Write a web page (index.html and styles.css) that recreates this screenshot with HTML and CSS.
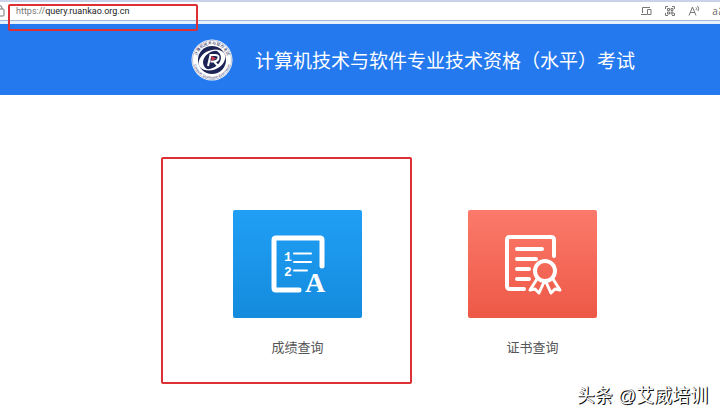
FILE: index.html
```html
<!DOCTYPE html>
<html lang="zh-CN">
<head>
  <meta charset="UTF-8" />
  <meta name="viewport" content="width=device-width, initial-scale=1.0" />
  <title>计算机技术与软件专业技术资格（水平）考试</title>
  <link rel="stylesheet" href="styles.css">
</head>
<body>
  <!-- Browser address bar -->
  <div class="browser-bar">
    <svg class="lock" viewBox="0 0 12 12" aria-hidden="true">
      <rect x="1" y="4" width="9" height="7" rx="1" />
      <path d="M3 4V3a2.500 2.500 0 0 1 5 0v1M5.500 7v1" />
    </svg>
    <div class="address">
      <label class="scheme" for="url">https://</label>
      <input id="url" class="url" type="text" value="query.ruankao.org.cn">
      <span class="mark mark-url"></span>
    </div>
    <div class="tools">
      <button type="button" class="tool" aria-label="设备">
        <svg viewBox="0 0 12 12"><path d="M2.500 8V2.500H10M1 9.500h6M7.500 4.500h3.500v5H7.500z" /></svg>
      </button>
      <button type="button" class="tool" aria-label="二维码">
        <svg viewBox="0 0 12 12"><path d="M1.500 4V1.500H4M8 1.500h2.500V4M10.500 8v2.500H8M4 10.500H1.500V8M3.500 3.500h2v2h-2zM7 3.500h2v2H7zM3.500 7h2v2h-2zM7 7h2v2H7z" /></svg>
      </button>
      <button type="button" class="tool" aria-label="朗读">
        <svg viewBox="0 0 12 12"><path d="M1 10.500L4.500 2 8 10.500M2.200 7.500h4.600M8 2.500q1 1 0 2.500M9.500 1q2 2 .5 5" /></svg>
      </button>
      <button type="button" class="tool tool-text" aria-label="翻译">aあ</button>
    </div>
  </div>

  <header class="site-header">
    <svg class="logo" viewBox="0 0 42 42" aria-hidden="true">
      <defs>
        <path id="ringTop" d="M5.500 21a15.500 15.500 0 0 1 31 0" />
        <path id="ringBottom" d="M2.500 21a18.500 18.500 0 0 0 37 0" />
      </defs>
      <circle cx="21" cy="21" r="20.500" fill="#fff" />
      <circle cx="21" cy="21" r="19.500" fill="none" stroke="#8d98bd" stroke-width=".6" />
      <text class="ring-text"><textPath href="#ringTop" startOffset="50%">计算机技术与软件考试</textPath></text>
      <text class="ring-text ring-latin"><textPath href="#ringBottom" startOffset="50%">Computer Qualification Examination</textPath></text>
      <circle cx="21" cy="21" r="14" fill="#1c2456" />
      <!-- swirl -->
      <path d="M7.500 24C9 13 21 8 31 12c-9-2-18 3-19 11 0 5 4 8 8 8-6 1-12-1-12.500-7z" fill="#fff" />
      <path d="M34.500 18C33 29 21 34 11 30c9 2 18-3 19-11 0-5-4-8-8-8 6-1 12 1 12.500 7z" fill="#fff" />
      <path d="M17 27l2.500-11h4.500q4 0 3.500 3t-4 3.500h-4M23 22.500l4 4.500" fill="none" stroke="#fff" stroke-width="2" />
      <path d="M20.500 17l4.500 2.500-4.500 2.500z" fill="#d8344a" />
    </svg>
    <h1>计算机技术与软件专业技术资格（水平）考试</h1>
  </header>

  <main class="entries">
    <a class="entry" href="#score">
      <span class="tile tile-blue">
        <svg viewBox="0 0 54 58" aria-hidden="true">
          <path class="frame" d="M28 55H5q-2 0-2-2V5q0-2 2-2h44q2 0 2 2v26" />
          <path class="rule" d="M23 18.500h17M23 27h17M23 35.500h13" />
          <text class="num" x="13" y="26">1</text>
          <text class="num" x="13" y="41">2</text>
          <text class="letter" x="34" y="57">A</text>
        </svg>
      </span>
      <span class="caption">成绩查询</span>
      <span class="mark mark-entry"></span>
    </a>
    <a class="entry" href="#certificate">
      <span class="tile tile-red">
        <svg viewBox="0 0 54 58" aria-hidden="true">
          <path class="frame thin" d="M18 54H4q-3 0-3-3V5q0-3 3-3h41q3 0 3 3v16" />
          <path class="rule thick" d="M11 14h25M11 24h19M11 34h12M11 44h12" />
          <circle class="medal" cx="39" cy="36" r="10" />
          <path class="ribbon" d="M31 44l-7 11 5-1 4 4 5-11M47 44l7 11-5-1-4 4-5-11" />
        </svg>
      </span>
      <span class="caption">证书查询</span>
    </a>
  </main>

  <div class="watermark">头条 @艾威培训</div>
</body>
</html>
```
FILE: styles.css
```css
:root {
  --brand: #2479ee;
  --mark: #dc3035;
  --text: #555;
}
* {
  margin: 0;
  padding: 0;
  box-sizing: border-box;
}
body {
  position: relative;
  min-height: 100vh;
  overflow-x: hidden;
  background: #fff;
  color: var(--text);
  font-family: "Liberation Sans", "Noto Sans CJK SC", sans-serif;
}

/* Address bar */
.browser-bar {
  display: flex;
  align-items: center;
  height: 24px;
  padding-bottom: 2px;
  border-top: 2px solid #c8d3ea;
  border-bottom: 3px solid #e6f1fc;
  box-shadow: inset 0 -1px #9fb9dc;
}
.lock {
  width: 12px;
  height: 12px;
  margin-left: -6px;
  fill: none;
  stroke: #777;
}
.address {
  position: relative;
  display: flex;
  align-items: center;
  flex: 1;
  margin-left: 10px;
  font: 9px/16px Roboto, sans-serif;
}
.scheme {
  color: #777;
}
.url {
  flex: 1;
  min-width: 0;
  border: none;
  outline: none;
  background: none;
  color: #222;
  font: inherit;
}
.tools {
  display: flex;
  gap: 12px;
  margin-right: -8px;
}
.tool {
  display: flex;
  align-items: center;
  justify-content: center;
  width: 12px;
  height: 12px;
  border: none;
  background: none;
  color: #666;
  cursor: pointer;
}
.tool svg {
  width: 12px;
  height: 12px;
  fill: none;
  stroke: #777;
}
.tool-text {
  width: 16px;
  font: 10px/12px "Open Sans", "Noto Sans CJK JP", sans-serif;
}

/* Header */
.site-header {
  display: flex;
  align-items: center;
  justify-content: center;
  gap: 22px;
  height: 71px;
  padding-left: 106px;
  background: var(--brand);
}
.site-header h1 {
  color: #fff;
  font-size: 19px;
  font-weight: 400;
  white-space: nowrap;
}
.logo {
  flex: none;
  width: 42px;
  height: 42px;
}
.ring-text {
  fill: #1c2456;
  font-size: 4px;
  text-anchor: middle;
}
.ring-latin {
  font-size: 3px;
}

/* Query entries */
.entries {
  display: flex;
  justify-content: center;
  gap: 106px;
  padding: 115px 0 48px 110px;
}
.entry {
  position: relative;
  display: flex;
  flex-direction: column;
  align-items: center;
  gap: 20px;
  color: var(--text);
  text-decoration: none;
}
.tile {
  display: flex;
  align-items: center;
  justify-content: center;
  width: 129px;
  height: 108px;
  border-radius: 2px;
}
.tile-blue {
  background: linear-gradient(#209ff5, #148bdd);
}
.tile-red {
  background: linear-gradient(#fb7a6b, #ee5846);
}
.tile svg {
  width: 54px;
  height: 58px;
  overflow: visible;
  fill: none;
  stroke: #fff;
  stroke-linecap: round;
  stroke-linejoin: round;
}
.tile .frame {
  stroke-width: 5;
}
.tile .thin {
  stroke-width: 4;
}
.tile .rule {
  stroke-width: 2;
}
.tile .thick {
  stroke-width: 4;
}
.tile .medal {
  stroke-width: 4;
}
.tile .ribbon {
  stroke-width: 3;
}
.num,
.letter {
  fill: #fff;
  stroke: none;
  font-weight: 700;
}
.num {
  font-family: "Liberation Mono", monospace;
  font-size: 13px;
}
.letter {
  font-family: "Liberation Serif", serif;
  font-size: 28px;
}
.caption {
  font-size: 13px;
  line-height: 20px;
}

/* Red highlight boxes */
.mark {
  position: absolute;
  border: 2px solid var(--mark);
  border-radius: 2px;
  pointer-events: none;
}
.mark-url {
  top: 1px;
  left: -8px;
  width: 190px;
  height: 27px;
}
.mark-entry {
  inset: -53px -50px -26px -72px;
}

.watermark {
  position: absolute;
  right: 12px;
  bottom: 9px;
  color: #fff;
  font-size: 18px;
  line-height: 26px;
  text-shadow: 1px 1px #111, 1px 0 #555;
}
```
